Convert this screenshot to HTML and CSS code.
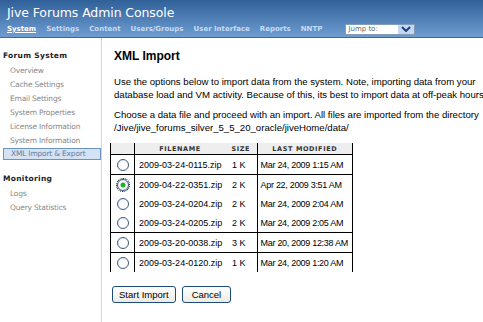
FILE: index.html
```html
<!DOCTYPE html>
<html lang="en">
<head>
    <meta charset="UTF-8">
    <title>Jive Forums Admin Console</title>
    <link rel="stylesheet" href="styles.css">
</head>
<body>
    <div class="header">
        <div class="title">Jive Forums Admin Console</div>
        <div class="nav">
            <a class="current">System</a>
            <a>Settings</a>
            <a>Content</a>
            <a>Users/Groups</a>
            <a>User Interface</a>
            <a>Reports</a>
            <a>NNTP</a>
            <div class="jump">
                <span>Jump to:</span>
                <span class="jump-btn">
                    <svg width="10" height="6" viewBox="0 0 10 6"><path d="M1 1 L5 5 L9 1" fill="none" stroke="#1d3f7a" stroke-width="2"/></svg>
                </span>
            </div>
        </div>
    </div>

    <div class="layout">
        <div class="sidebar">
            <div class="group">Forum System</div>
            <div class="item">Overview</div>
            <div class="item">Cache Settings</div>
            <div class="item">Email Settings</div>
            <div class="item">System Properties</div>
            <div class="item">License Information</div>
            <div class="item">System Information</div>
            <div class="item active">XML Import &amp; Export</div>
            <div class="group second">Monitoring</div>
            <div class="item">Logs</div>
            <div class="item">Query Statistics</div>
        </div>

        <div class="main">
            <h1>XML Import</h1>
            <p>Use the options below to import data from the system. Note, importing data from your<br>
            database load and VM activity. Because of this, its best to import data at off-peak hours.</p>
            <p>Choose a data file and proceed with an import. All files are imported from the directory<br>
            /Jive/jive_forums_silver_5_5_20_oracle/jiveHome/data/</p>

            <table class="files">
                <colgroup>
                    <col class="c-sel">
                    <col class="c-file">
                    <col class="c-size">
                    <col class="c-mod">
                </colgroup>
                <tr>
                    <th class="sel"></th>
                    <th>FILENAME</th>
                    <th class="size">SIZE</th>
                    <th>LAST MODIFIED</th>
                </tr>
                <tr class="line">
                    <td class="sel"><span class="radio"></span></td>
                    <td>2009-03-24-0115.zip</td>
                    <td class="size">1 K</td>
                    <td class="mod">Mar 24, 2009 1:15 AM</td>
                </tr>
                <tr>
                    <td class="sel"><span class="radio checked"></span></td>
                    <td>2009-04-22-0351.zip</td>
                    <td class="size">2 K</td>
                    <td class="mod">Apr 22, 2009 3:51 AM</td>
                </tr>
                <tr>
                    <td class="sel"><span class="radio"></span></td>
                    <td>2009-03-24-0204.zip</td>
                    <td class="size">2 K</td>
                    <td class="mod">Mar 24, 2009 2:04 AM</td>
                </tr>
                <tr class="line">
                    <td class="sel"><span class="radio"></span></td>
                    <td>2009-03-24-0205.zip</td>
                    <td class="size">2 K</td>
                    <td class="mod">Mar 24, 2009 2:05 AM</td>
                </tr>
                <tr class="line">
                    <td class="sel"><span class="radio"></span></td>
                    <td>2009-03-20-0038.zip</td>
                    <td class="size">3 K</td>
                    <td class="mod">Mar 20, 2009 12:38 AM</td>
                </tr>
                <tr>
                    <td class="sel"><span class="radio"></span></td>
                    <td>2009-03-24-0120.zip</td>
                    <td class="size">1 K</td>
                    <td class="mod">Mar 24, 2009 1:20 AM</td>
                </tr>
            </table>

            <div class="buttons">
                <button>Start Import</button>
                <button class="cancel">Cancel</button>
            </div>
        </div>
    </div>
</body>
</html>
```

FILE: styles.css
```css
body {
    margin: 0;
    background: #fff;
    font-family: "Liberation Sans", Arial, sans-serif;
    color: #000;
    overflow: hidden;
}
.header {
    height: 37px;
    background: linear-gradient(#2f6099, #6f9dd1);
    border-bottom: 1px solid #3d6796;
    padding-left: 7px;
}
.title {
    font-family: "DejaVu Sans", Verdana, sans-serif;
    font-size: 12.5px;
    color: #fff;
    padding-top: 5px;
    height: 17px;
    letter-spacing: -0.1px;
}
.nav {
    display: flex;
    align-items: center;
    height: 14px;
    font-family: "DejaVu Sans", Verdana, sans-serif;
    font-size: 7px;
    font-weight: bold;
}
.nav a {
    color: #c6dbf5;
    margin-right: 10px;
}
.nav a.current {
    color: #fff;
    text-decoration: underline;
}
.jump {
    margin-left: 13px;
    width: 66px;
    height: 9px;
    background: #fff;
    border: 1px solid #7f9db9;
    display: flex;
    align-items: center;
    justify-content: space-between;
    font-weight: normal;
    color: #666;
    font-size: 7px;
    padding-left: 2px;
    box-sizing: content-box;
}
.jump-btn {
    width: 16px;
    height: 9px;
    background: #c4d6f3;
    display: flex;
    align-items: center;
    justify-content: center;
}
.layout {
    display: flex;
    height: 284px;
}
.sidebar {
    width: 103px;
    border-right: 1px solid #c8d6e6;
    padding: 11px 0 0 3px;
    box-sizing: content-box;
    font-family: "DejaVu Sans", Verdana, sans-serif;
    font-size: 7.5px;
}
.group {
    font-weight: bold;
    color: #222;
    height: 14px;
    line-height: 14px;
    margin-bottom: 1px;
    letter-spacing: 0.3px;
}
.group.second {
    margin-top: 12px;
}
.item {
    color: #888;
    height: 14px;
    line-height: 14px;
    padding-left: 7px;
    letter-spacing: -0.2px;
}
.item.active {
    width: 89px;
    height: 10px;
    line-height: 10px;
    background: #d3e2f4;
    border: 1px solid #6a93c4;
    color: #6a7d94;
}
.main {
    padding: 11px 0 0 12px;
    font-size: 9.6px;
    white-space: nowrap;
}
h1 {
    font-size: 12px;
    margin: 0 0 12px 0;
    height: 14px;
}
p {
    margin: 0 0 7px 0;
    line-height: 13px;
}
.files {
    border-collapse: collapse;
    table-layout: fixed;
    width: 243px;
    margin: 9px 0 0 -4px;
    border-left: 1px solid #000;
    border-right: 1px solid #000;
}
.c-sel { width: 24px; }
.c-file { width: 90px; }
.c-size { width: 32px; }
.c-mod { width: 95px; }
.files th {
    background: #eee;
    font-family: "DejaVu Sans", Verdana, sans-serif;
    font-size: 6.5px;
    letter-spacing: 0.6px;
    color: #333;
    height: 11px;
    padding: 0;
    border-bottom: 1px solid #000;
}
.files td {
    height: 19px;
    padding: 0 0 0 4px;
    font-size: 9px;
}
.files tr.line td {
    border-bottom: 1px solid #000;
}
.files .sel {
    border-right: 1px solid #000;
    text-align: center;
    padding: 0;
}
.files .size {
    border-right: 1px solid #000;
}
.files td.size {
    text-align: right;
    padding-right: 11px;
}
.files td.mod {
    padding-left: 3px;
    letter-spacing: -0.3px;
}
.radio {
    display: inline-block;
    width: 10px;
    height: 10px;
    border-radius: 50%;
    border: 1px solid #3c5a86;
    background: radial-gradient(circle at 60% 60%, #fff 40%, #dde3ea);
    vertical-align: middle;
}
.radio.checked {
    background: radial-gradient(circle, #22b024 0, #22b024 2px, #fff 3px, #dde3ea);
    outline: 1px dotted #000;
    outline-offset: 0;
}
.buttons {
    margin-top: 14px;
    display: flex;
    gap: 6px;
    margin-left: -2px;
}
button {
    font-family: "Liberation Sans", Arial, sans-serif;
    font-size: 9.5px;
    height: 17px;
    padding: 0 6px;
    border: 1px solid #1d4b7c;
    border-radius: 3px;
    background: linear-gradient(#fff, #ecebe4);
    color: #000;
}
button.cancel {
    padding: 0 9px;
}
```
